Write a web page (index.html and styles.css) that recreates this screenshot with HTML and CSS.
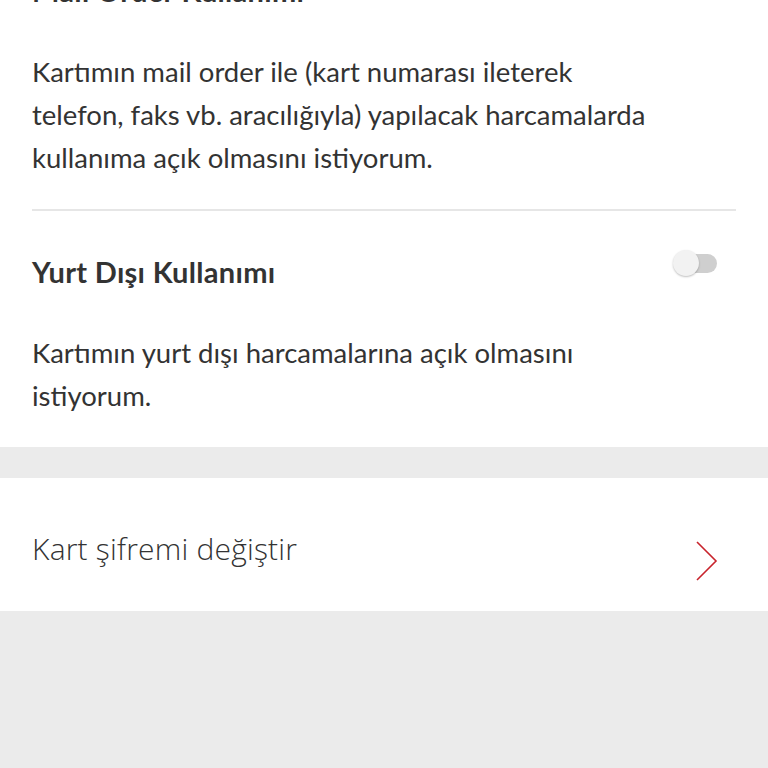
FILE: index.html
```html
<!DOCTYPE html>
<html lang="tr">
<head>
    <meta charset="UTF-8">
    <meta name="viewport" content="width=device-width, initial-scale=1.0">
    <title>Kart Ayarları</title>
    <link rel="stylesheet" href="styles.css">
</head>
<body>
    <div class="screen">
        <div class="card settings">
            <div class="setting">
                <div class="setting-head">
                    <h3>Mail Order Kullanımı</h3>
                    <span class="toggle"></span>
                </div>
                <p>Kartımın mail order ile (kart numarası ileterek telefon, faks vb. aracılığıyla) yapılacak harcamalarda kullanıma açık olmasını istiyorum.</p>
            </div>
            <div class="setting">
                <div class="setting-head">
                    <h3>Yurt Dışı Kullanımı</h3>
                    <span class="toggle"></span>
                </div>
                <p>Kartımın yurt dışı harcamalarına açık olmasını istiyorum.</p>
            </div>
        </div>

        <div class="card link-row">
            <span class="link-label">Kart şifremi değiştir</span>
            <svg class="chevron" width="22" height="40" viewBox="0 0 22 40">
                <path d="M1 1 L20 20 L1 39" fill="none" stroke="#c8232c" stroke-width="1.6"/>
            </svg>
        </div>
    </div>
</body>
</html>
```

FILE: styles.css
```css
html, body {
    margin: 0;
    padding: 0;
    height: 100%;
    background: #ebebeb;
    overflow: hidden;
}
body {
    font-family: Lato, "Open Sans", sans-serif;
    color: #333;
}
.screen {
    margin-top: -70px;
}
.card {
    background: white;
}
.settings {
    padding: 0 32px;
    margin-bottom: 31px;
}
.setting {
    padding: 46px 0 30px;
}
.setting + .setting {
    border-top: 2px solid #e6e6e6;
}
.setting-head {
    display: flex;
    justify-content: space-between;
    align-items: flex-start;
}
.setting h3 {
    margin: 0;
    font-size: 29px;
    line-height: 30px;
    font-weight: 700;
    letter-spacing: 0.3px;
}
.setting p {
    margin: 44px 0 0;
    font-size: 27.5px;
    line-height: 43px;
    font-weight: 400;
    max-width: 636px;
}
.toggle {
    position: relative;
    width: 45px;
    height: 28px;
    margin: -8px 18px 0 0;
}
.toggle:before {
    content: '';
    position: absolute;
    left: 12px;
    top: 5px;
    width: 32px;
    height: 19px;
    border-radius: 10px;
    background: #cfcfcf;
}
.toggle:after {
    content: '';
    position: absolute;
    left: 0;
    top: 1px;
    width: 26px;
    height: 26px;
    border-radius: 50%;
    background: #f2f2f2;
    box-shadow: 0 1px 2px rgba(0,0,0,0.25);
}
.link-row {
    display: flex;
    justify-content: space-between;
    align-items: flex-start;
    height: 133px;
    padding: 0 50px 0 32px;
    box-sizing: border-box;
}
.link-label {
    margin-top: 52px;
    font-family: "Open Sans", sans-serif;
    font-size: 30px;
    line-height: 38px;
    font-weight: 300;
    letter-spacing: 0.2px;
}
.chevron {
    margin-top: 63px;
}
```
